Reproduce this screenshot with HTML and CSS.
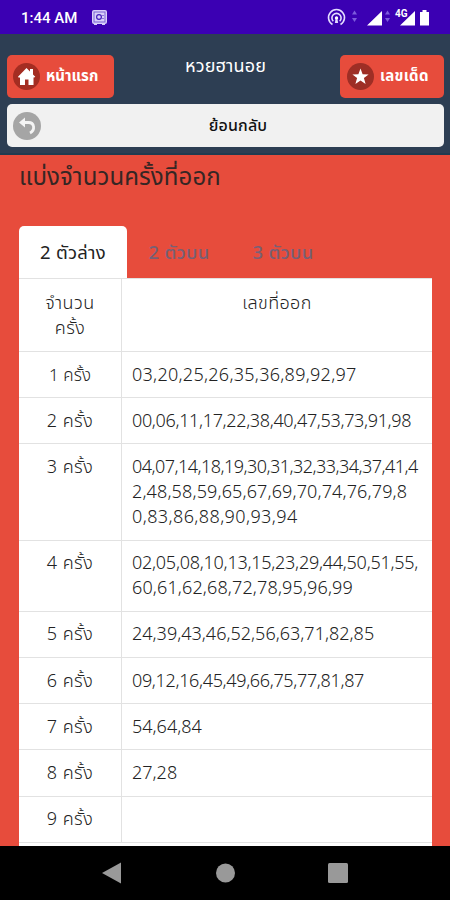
FILE: index.html
```html
<!DOCTYPE html>
<html lang="th">
<head>
<meta charset="utf-8">
<title>หวยฮานอย</title>
<link rel="stylesheet" href="styles.css">
</head>
<body>
<div class="status">
  <span class="clock">1:44 AM</span>
  <svg class="safe" width="17" height="17" viewBox="0 0 17 17"><rect x="1" y="1" width="15" height="14" rx="2" fill="#d9d0fa"/><rect x="3" y="3" width="11" height="10" fill="none" stroke="#7a62d2"/><circle cx="8" cy="8" r="2.4" fill="none" stroke="#4420bd" stroke-width="1.2"/><path d="M12 6v1M12 9v1" stroke="#4420bd"/><path d="M3 15h3v1H3zM11 15h3v1h-3z" fill="#d9d0fa"/></svg>
  <svg class="signals" width="106" height="24" viewBox="0 0 106 24" fill="#fff">
    <g fill="none" stroke="#e4dcff" stroke-width="1.600"><path d="M5.500 18.500a8 8 0 1 1 8 0"/><path d="M6.300 15.300a4.600 4.600 0 1 1 6.400 0"/></g><circle cx="9.500" cy="12" r="1.700"/><path d="M8.500 13h2l.6 4h-3.200z" fill="#e4dcff"/>
    <g fill="#7d5bdc"><path d="M25 8.500l2.500-4 2.500 4zM25 12h5l-2.500 4z"/><path d="M58 8.500l2.500-4 2.500 4zM58 12h5l-2.500 4z"/></g>
    <path d="M40 19.500L55 5v14.500zM73 19.500L88 5v14.500zM93 6h2.500V4h4v2h2.500v13.500h-9z"/>
    <text x="68" y="11" class="net">4G</text>
  </svg>
</div>
<header class="top">
  <div class="bar">
    <a class="btn home"><svg width="27" height="27" viewBox="0 0 27 27"><circle cx="13.500" cy="13.500" r="13.500" fill="#a42d22"/><path d="M5 13.800L13.500 5l3.500 3.500V6h3v5.500l2.300 2.300-1.500 1L20.500 14v8h-5v-5.500h-3.500V22H7v-8l-.9.900z" fill="#fff"/></svg><span>หน้าแรก</span></a>
    <h1>หวยฮานอย</h1>
    <a class="btn star"><svg width="27" height="27" viewBox="0 0 27 27"><circle cx="13.500" cy="13.500" r="13.500" fill="#9e2e25"/><path d="M13.500 5.500l2.100 5.700 6 .2-4.700 3.700 1.700 5.900-5.100-3.400L8.400 21l1.700-5.900-4.700-3.700 6-.2z" fill="#fff"/></svg><span>เลขเด็ด</span></a>
  </div>
  <a class="back"><svg width="28" height="28" viewBox="0 0 28 28"><circle cx="14" cy="14" r="14" fill="#a5a5a5"/><path d="M9 10.500h6.500c6 0 7 7.500 1.500 10.500" fill="none" stroke="#f4f4f4" stroke-width="2.800"/><path d="M6 10.500l6-5v10z" fill="#f4f4f4"/></svg><span>ย้อนกลับ</span></a>
</header>
<main>
  <h2>แบ่งจำนวนครั้งที่ออก</h2>
  <nav><a class="tab active">2 ตัวล่าง</a><a class="tab">2 ตัวบน</a><a class="tab">3 ตัวบน</a></nav>
  <div class="table">
    <div class="row head"><div class="n">จำนวน<br>ครั้ง</div><div class="v">เลขที่ออก</div></div>
    <div class="row"><div class="n one">1 ครั้ง</div><div class="v"><span class="wide">03,20,25,26,35,36,89,92,97</span></div></div>
    <div class="row"><div class="n">2 ครั้ง</div><div class="v"><span class="tight">00,06,11,17,22,38,40,47,53,73,91,98</span></div></div>
    <div class="row"><div class="n">3 ครั้ง</div><div class="v"><span class="tighter">04,07,14,18,19,30,31,32,33,34,37,41,4</span><br><span class="loose">2,48,58,59,65,67,69,70,74,76,79,8</span><br><span class="wider">0,83,86,88,90,93,94</span></div></div>
    <div class="row"><div class="n">4 ครั้ง</div><div class="v"><span class="snug">02,05,08,10,13,15,23,29,44,50,51,55,</span><br><span class="loose">60,61,62,68,72,78,95,96,99</span></div></div>
    <div class="row"><div class="n">5 ครั้ง</div><div class="v">24,39,43,46,52,56,63,71,82,85</div></div>
    <div class="row"><div class="n">6 ครั้ง</div><div class="v"><span class="tight">09,12,16,45,49,66,75,77,81,87</span></div></div>
    <div class="row"><div class="n">7 ครั้ง</div><div class="v">54,64,84</div></div>
    <div class="row"><div class="n">8 ครั้ง</div><div class="v">27,28</div></div>
    <div class="row last"><div class="n">9 ครั้ง</div><div class="v"></div></div>
  </div>
</main>
<footer>
  <svg width="450" height="54" viewBox="0 0 450 54" fill="#999"><path d="M102 27l19-10.500v21z"/><circle cx="225.500" cy="27" r="9.500"/><rect x="328" y="17" width="20" height="20" rx="1.500"/></svg>
</footer>
</body>
</html>
```
FILE: styles.css
```css
* { box-sizing: border-box; }
body { margin: 0; width: 450px; height: 900px; overflow: hidden; display: flex; flex-direction: column; font-family: "Noto Sans", "Noto Sans Thai", sans-serif; color: #222; }
.status { flex: 0 0 34px; background: #3b00b3; display: flex; align-items: center; padding: 0 17px 0 21px; color: #fff; }
.clock { font: 500 15px Roboto, sans-serif; width: 70px; white-space: nowrap; padding-top: 2px; }
.signals { margin-left: auto; margin-top: 2px; }
.net { font: bold 10px Roboto, sans-serif; }
.top { flex: 0 0 121px; background: #2d3e53; border-bottom: 2px solid #203b50; padding: 21px 6px 0 7px; }
.bar { display: flex; justify-content: space-between; align-items: flex-start; }
.btn { height: 43px; border-radius: 5px; background: #e74c3c; color: #fff; display: flex; align-items: center; font-size: 15px; font-weight: bold; padding-left: 6px; gap: 6px; white-space: nowrap; }
.home { width: 107px; }
.star { width: 104px; padding-left: 7px; letter-spacing: .3px; }
h1 { font-size: 18px; font-weight: 450; color: #fff; margin: 0; line-height: 20px; letter-spacing: .2px; padding-right: 3px; }
.back { display: flex; align-items: center; height: 43px; margin-top: 6px; border-radius: 5px; background: #f1f1f1; padding-left: 6px; color: #111; }
.back span { flex: 1; text-align: center; padding-right: 9px; font-weight: 500; font-size: 16px; letter-spacing: .150px; }
main { flex: 1; min-height: 0; overflow: hidden; background: #e74c3c; padding: 0 18px 0 19px; }
h2 { margin: 0; height: 71px; font-size: 24px; font-weight: 380; line-height: 42px; color: #352624; letter-spacing: .100px; }
nav { display: flex; height: 52px; line-height: 52px; font-size: 18.500px; letter-spacing: .250px; }
.tab { width: 104px; text-align: center; color: #776075; font-weight: 500; }
.active { width: 108px; background: #fff; border-radius: 5px 5px 0 0; color: #222; font-weight: 400; }
.table { background: #fff; height: 100%; }
.row { display: flex; border-top: 1px solid #e2e2e2; font-size: 18px; line-height: 25px; }
.n { width: 103px; border-right: 1px solid #e2e2e2; text-align: center; padding: 9.700px 0 10.500px; font-weight: 350; letter-spacing: .450px; }
.one { font-size: 17px; letter-spacing: .1px; }
.v { flex: 1; padding: 9.700px 0 10.500px 10px; font-weight: 350; white-space: nowrap; }
.head .n { padding: 11px 0; }
.head .v { text-align: center; padding: 11px 0; letter-spacing: .4px; }
.last { border-bottom: 1px solid #e2e2e2; }
.wide { letter-spacing: .270px; }
.wider { letter-spacing: .400px; }
.loose { letter-spacing: .130px; }
.snug { letter-spacing: -.260px; }
.tight { letter-spacing: -.350px; }
.tighter { letter-spacing: -.540px; }
footer { flex: 0 0 54px; background: #000; }
footer svg { display: block; }
```
